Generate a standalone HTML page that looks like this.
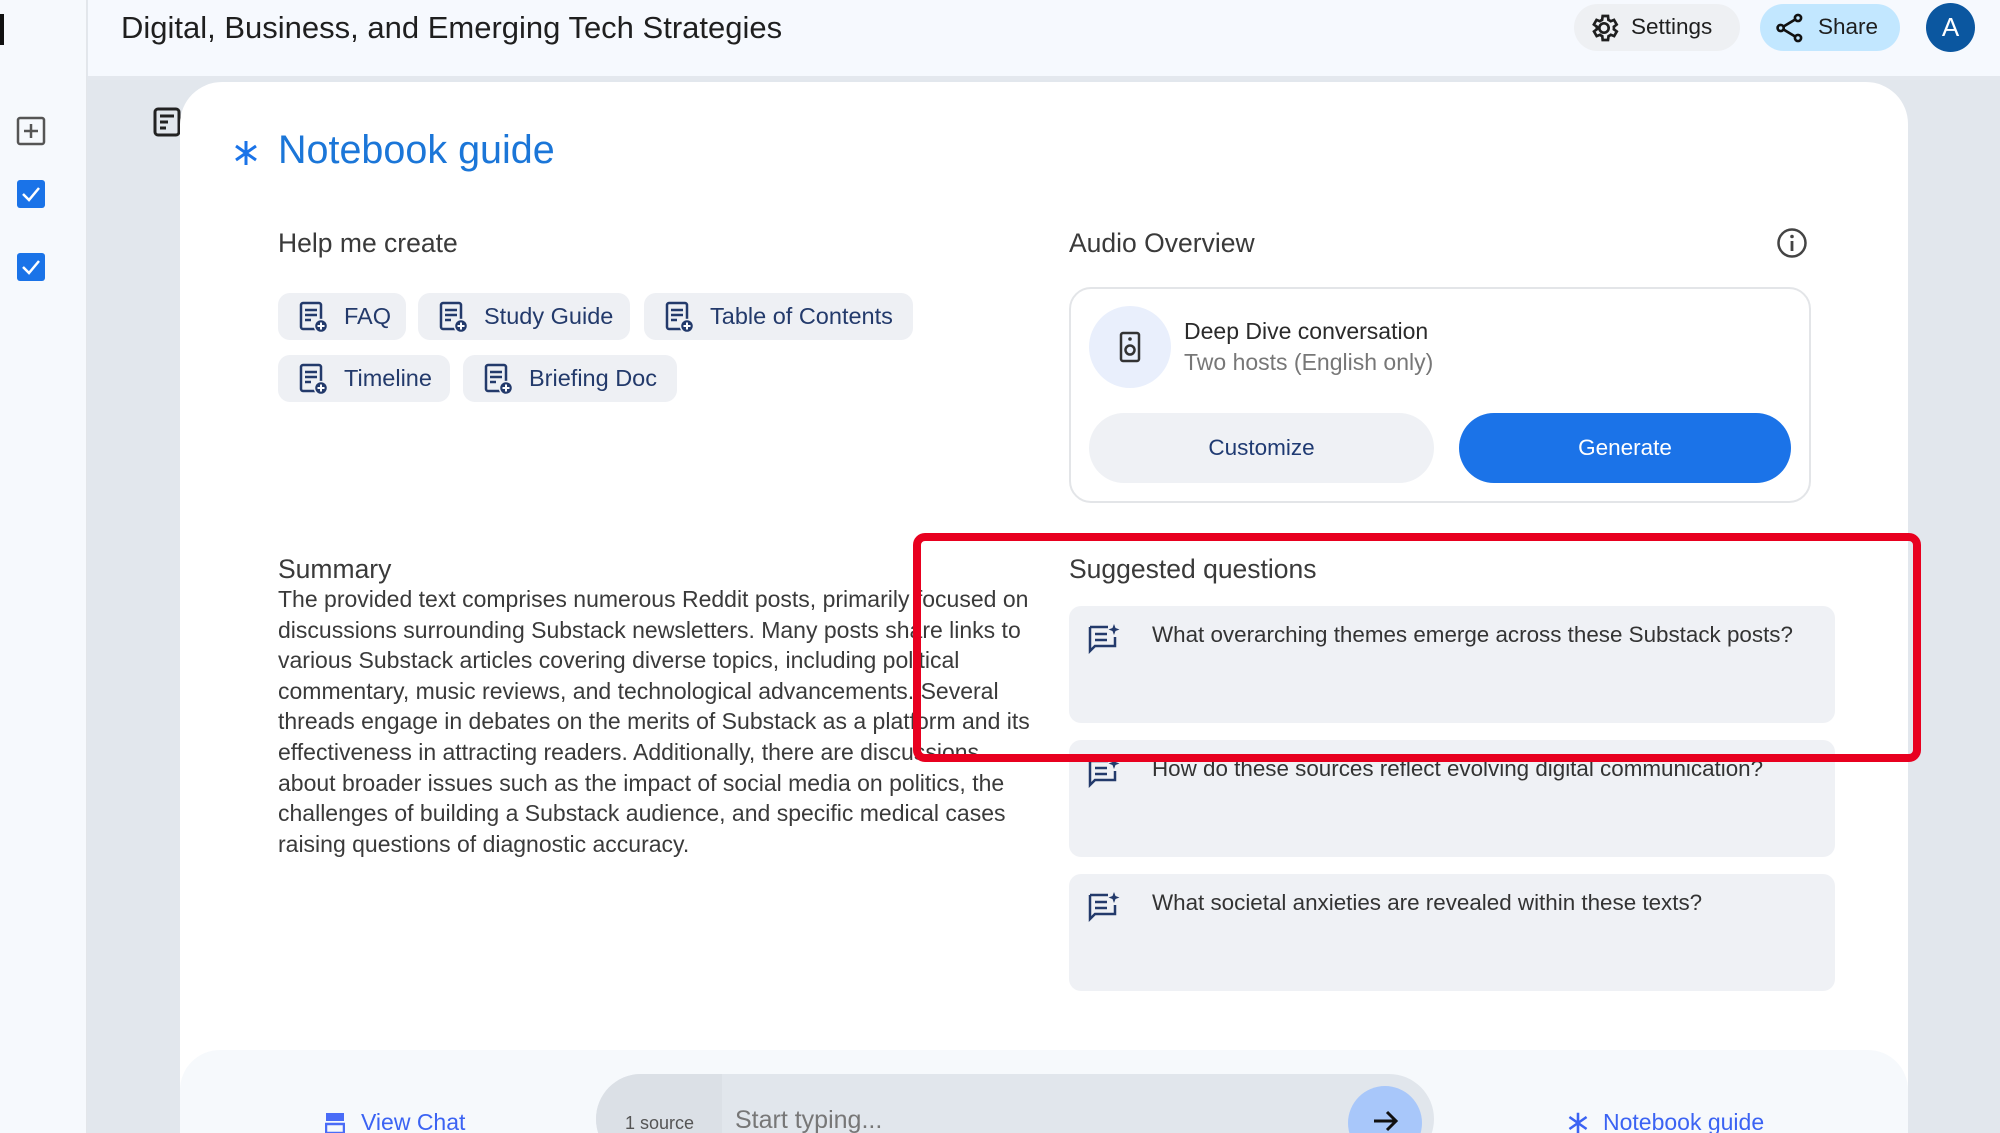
<!DOCTYPE html>
<html style="overflow:hidden;width:2000px;height:1133px"><head><meta charset="utf-8"><style>
*{margin:0;padding:0;box-sizing:border-box}
body{width:2000px;height:1133px;overflow:hidden;background:#e2e7ed;font-family:"Liberation Sans",Arial,sans-serif;position:relative;color:#1f1f1f}
.a{position:absolute}
.chip{position:absolute;height:47px;background:#eef0f4;border-radius:12px;display:flex;align-items:center;padding-left:20px;font-size:23.5px;color:#233a6b;font-weight:500}
.chip svg{margin-right:14px}
.q{position:absolute;left:1069px;width:766px;height:117px;background:#eff1f5;border-radius:12px}
.q svg{position:absolute;left:18px;top:16px}
.q span{position:absolute;left:83px;top:16px;font-size:22.4px;color:#333}
.sum{position:absolute;left:278px;top:584px;font-size:23px;line-height:30.6px;color:#3a3a3a;white-space:nowrap}
</style></head><body>
<div class="a" style="left:0;top:0;width:2000px;height:1133px;overflow:hidden">
<!-- sidebar -->
<div class="a" style="left:0;top:0;width:87px;height:1133px;background:#f6f9fd;border-right:1px solid #e3e6ea"></div>
<div class="a" style="left:0;top:14px;width:4px;height:31px;background:#111"></div>
<svg class="a" style="left:16px;top:116px" width="30" height="30" viewBox="0 0 30 30"><rect x="2" y="2" width="26" height="26" rx="2" fill="none" stroke="#555" stroke-width="2.5"/><path d="M15 8v14M8 15h14" stroke="#555" stroke-width="2.5"/></svg>
<svg class="a" style="left:16px;top:179px" width="30" height="30" viewBox="0 0 30 30"><rect x="1" y="1" width="28" height="28" rx="3" fill="#1a73e8"/><path d="M7 15l6 6 10-12" fill="none" stroke="#fff" stroke-width="2.5"/></svg>
<svg class="a" style="left:16px;top:252px" width="30" height="30" viewBox="0 0 30 30"><rect x="1" y="1" width="28" height="28" rx="3" fill="#1a73e8"/><path d="M7 15l6 6 10-12" fill="none" stroke="#fff" stroke-width="2.5"/></svg>
<!-- header -->
<div class="a" style="left:88px;top:0;width:1912px;height:80px;background:#f6f9fe;border-bottom:4px solid #e4e8ee"></div>
<div class="a" style="left:121px;top:10px;font-size:31px;color:#1f1f1f">Digital, Business, and Emerging Tech Strategies</div>
<div class="a" style="left:1574px;top:4px;width:166px;height:47px;background:#eef0f3;border-radius:24px"></div>
<svg class="a" style="left:1588px;top:12px" width="32" height="32" viewBox="0 0 24 24"><path d="M12 8.5a3.5 3.5 0 1 0 0 7 3.5 3.5 0 0 0 0-7zM19.4 13a7.5 7.5 0 0 0 0-2l2.1-1.6-2-3.5-2.5 1a7.6 7.6 0 0 0-1.7-1L15 3h-4l-.4 2.9a7.6 7.6 0 0 0-1.7 1l-2.5-1-2 3.5L6.6 11a7.5 7.5 0 0 0 0 2l-2.1 1.6 2 3.5 2.5-1a7.6 7.6 0 0 0 1.7 1L11 21h4l.4-2.9a7.6 7.6 0 0 0 1.7-1l2.5 1 2-3.5z" fill="none" stroke="#1f1f1f" stroke-width="2"/></svg>
<div class="a" style="left:1631px;top:14px;font-size:22.5px;color:#1f1f1f">Settings</div>
<div class="a" style="left:1760px;top:4px;width:140px;height:47px;background:#c2e7ff;border-radius:24px"></div>
<svg class="a" style="left:1774px;top:12px" width="32" height="32" viewBox="0 0 24 24"><circle cx="18" cy="4.5" r="2.3" fill="none" stroke="#111" stroke-width="2"/><circle cx="5" cy="12" r="2.3" fill="none" stroke="#111" stroke-width="2"/><circle cx="18" cy="19.5" r="2.3" fill="none" stroke="#111" stroke-width="2"/><path d="M7 11l9-5.5M7 13l9 5.5" stroke="#111" stroke-width="2"/></svg>
<div class="a" style="left:1818px;top:14px;font-size:22.5px;color:#1f1f1f">Share</div>
<div class="a" style="left:1926px;top:3px;width:49px;height:49px;border-radius:50%;background:#0b57a0;color:#fff;font-size:26px;text-align:center;line-height:49px">A</div>
<!-- main card -->
<svg class="a" style="left:153px;top:107px" width="28" height="30" viewBox="0 0 28 30"><rect x="2" y="2" width="24" height="26" rx="3" fill="none" stroke="#222" stroke-width="3"/><path d="M7 9h14M7 15h8M7 21h6" stroke="#222" stroke-width="3"/></svg>
<div class="a" style="left:180px;top:82px;width:1728px;height:1100px;background:#fff;border-radius:42px"></div>
<svg class="a" style="left:232px;top:139px" width="28" height="28" viewBox="0 0 28 28"><path d="M14 2v24M4 7l20 14M24 7L4 21" stroke="#1a73e8" stroke-width="3"/></svg>
<div class="a" style="left:278px;top:128px;font-size:39.5px;color:#1b76d8;font-weight:500">Notebook guide</div>
<div class="a" style="left:278px;top:228px;font-size:26.5px;color:#3a3a3a;font-weight:500">Help me create</div>
<div class="chip" style="left:278px;top:293px;width:128px"><svg width="32" height="34" viewBox="0 0 32 34"><rect x="3" y="3" width="20" height="26" rx="2" fill="none" stroke="#233a6b" stroke-width="2.5"/><path d="M7 10h12M7 15h12M7 20h6" stroke="#233a6b" stroke-width="2.5"/><circle cx="23" cy="26" r="6.5" fill="#233a6b" stroke="#eef0f4" stroke-width="1.5"/><path d="M23 22.5v7M19.5 26h7" stroke="#fff" stroke-width="2"/></svg>FAQ</div>
<div class="chip" style="left:418px;top:293px;width:212px"><svg width="32" height="34" viewBox="0 0 32 34"><rect x="3" y="3" width="20" height="26" rx="2" fill="none" stroke="#233a6b" stroke-width="2.5"/><path d="M7 10h12M7 15h12M7 20h6" stroke="#233a6b" stroke-width="2.5"/><circle cx="23" cy="26" r="6.5" fill="#233a6b" stroke="#eef0f4" stroke-width="1.5"/><path d="M23 22.5v7M19.5 26h7" stroke="#fff" stroke-width="2"/></svg>Study Guide</div>
<div class="chip" style="left:644px;top:293px;width:269px"><svg width="32" height="34" viewBox="0 0 32 34"><rect x="3" y="3" width="20" height="26" rx="2" fill="none" stroke="#233a6b" stroke-width="2.5"/><path d="M7 10h12M7 15h12M7 20h6" stroke="#233a6b" stroke-width="2.5"/><circle cx="23" cy="26" r="6.5" fill="#233a6b" stroke="#eef0f4" stroke-width="1.5"/><path d="M23 22.5v7M19.5 26h7" stroke="#fff" stroke-width="2"/></svg>Table of Contents</div>
<div class="chip" style="left:278px;top:355px;width:172px"><svg width="32" height="34" viewBox="0 0 32 34"><rect x="3" y="3" width="20" height="26" rx="2" fill="none" stroke="#233a6b" stroke-width="2.5"/><path d="M7 10h12M7 15h12M7 20h6" stroke="#233a6b" stroke-width="2.5"/><circle cx="23" cy="26" r="6.5" fill="#233a6b" stroke="#eef0f4" stroke-width="1.5"/><path d="M23 22.5v7M19.5 26h7" stroke="#fff" stroke-width="2"/></svg>Timeline</div>
<div class="chip" style="left:463px;top:355px;width:214px"><svg width="32" height="34" viewBox="0 0 32 34"><rect x="3" y="3" width="20" height="26" rx="2" fill="none" stroke="#233a6b" stroke-width="2.5"/><path d="M7 10h12M7 15h12M7 20h6" stroke="#233a6b" stroke-width="2.5"/><circle cx="23" cy="26" r="6.5" fill="#233a6b" stroke="#eef0f4" stroke-width="1.5"/><path d="M23 22.5v7M19.5 26h7" stroke="#fff" stroke-width="2"/></svg>Briefing Doc</div>
<!-- audio -->
<div class="a" style="left:1069px;top:228px;font-size:26.5px;color:#3a3a3a;font-weight:500">Audio Overview</div>
<svg class="a" style="left:1776px;top:227px" width="32" height="32" viewBox="0 0 32 32"><circle cx="16" cy="16" r="13.5" fill="none" stroke="#444" stroke-width="2.5"/><path d="M16 14v10" stroke="#444" stroke-width="2.8"/><circle cx="16" cy="9.5" r="1.8" fill="#444"/></svg>
<div class="a" style="left:1069px;top:287px;width:742px;height:216px;border:2px solid #e3e5e8;border-radius:22px"></div>
<div class="a" style="left:1089px;top:306px;width:82px;height:82px;border-radius:50%;background:#e9effc"></div>
<svg class="a" style="left:1118px;top:331px" width="24" height="32" viewBox="0 0 24 32"><rect x="3" y="2" width="18" height="28" rx="2" fill="none" stroke="#333" stroke-width="2.5"/><circle cx="12" cy="8" r="1.8" fill="#333"/><circle cx="12" cy="19" r="4.5" fill="none" stroke="#333" stroke-width="2.5"/></svg>
<div class="a" style="left:1184px;top:318px;font-size:23px;color:#2a2a2a;font-weight:500">Deep Dive conversation</div>
<div class="a" style="left:1184px;top:349px;font-size:23px;color:#777">Two hosts (English only)</div>
<div class="a" style="left:1089px;top:413px;width:345px;height:70px;background:#eff1f5;border-radius:35px;text-align:center;line-height:70px;font-size:22.5px;color:#1f3a72;font-weight:500">Customize</div>
<div class="a" style="left:1459px;top:413px;width:332px;height:70px;background:#1b73e8;border-radius:35px;text-align:center;line-height:70px;font-size:22.5px;color:#fff;font-weight:500">Generate</div>
<!-- summary -->
<div class="a" style="left:278px;top:554px;font-size:26.5px;color:#3a3a3a;font-weight:500">Summary</div>
<div class="sum">The provided text comprises numerous Reddit posts, primarily focused on<br>discussions surrounding Substack newsletters. Many posts share links to<br>various Substack articles covering diverse topics, including political<br>commentary, music reviews, and technological advancements. Several<br>threads engage in debates on the merits of Substack as a platform and its<br>effectiveness in attracting readers. Additionally, there are discussions<br>about broader issues such as the impact of social media on politics, the<br>challenges of building a Substack audience, and specific medical cases<br>raising questions of diagnostic accuracy.</div>
<!-- suggested -->
<div class="a" style="left:1069px;top:554px;font-size:26.5px;color:#3a3a3a;font-weight:500">Suggested questions</div>
<div class="q" style="top:606px"><svg width="34" height="32" viewBox="0 0 34 32"><path d="M3 5h18M3 5v24l5-5h20V15" fill="none" stroke="#233a6b" stroke-width="2.5"/><path d="M8 12h12M8 18h12" stroke="#233a6b" stroke-width="2.5"/><path d="M27 2l1.5 4 4 1.5-4 1.5-1.5 4-1.5-4-4-1.5 4-1.5z" fill="#233a6b"/></svg><span>What overarching themes emerge across these Substack posts?</span></div>
<div class="q" style="top:740px"><svg width="34" height="32" viewBox="0 0 34 32"><path d="M3 5h18M3 5v24l5-5h20V15" fill="none" stroke="#233a6b" stroke-width="2.5"/><path d="M8 12h12M8 18h12" stroke="#233a6b" stroke-width="2.5"/><path d="M27 2l1.5 4 4 1.5-4 1.5-1.5 4-1.5-4-4-1.5 4-1.5z" fill="#233a6b"/></svg><span>How do these sources reflect evolving digital communication?</span></div>
<div class="q" style="top:874px"><svg width="34" height="32" viewBox="0 0 34 32"><path d="M3 5h18M3 5v24l5-5h20V15" fill="none" stroke="#233a6b" stroke-width="2.5"/><path d="M8 12h12M8 18h12" stroke="#233a6b" stroke-width="2.5"/><path d="M27 2l1.5 4 4 1.5-4 1.5-1.5 4-1.5-4-4-1.5 4-1.5z" fill="#233a6b"/></svg><span>What societal anxieties are revealed within these texts?</span></div>
<!-- red box -->
<div class="a" style="left:913px;top:533px;width:1008px;height:229px;border:8px solid #e8001f;border-radius:12px"></div>
<!-- bottom -->
<div class="a" style="left:180px;top:1050px;width:1728px;height:100px;background:#f6f9fc;border-radius:40px 40px 0 0"></div>
<div class="a" style="left:596px;top:1074px;width:838px;height:90px;background:#e1e6ec;border-radius:45px;overflow:hidden"><div style="width:126px;height:100%;background:#dbe0e6"></div></div>
<div class="a" style="left:625px;top:1113px;font-size:18px;color:#555">1 source</div>
<div class="a" style="left:735px;top:1106px;font-size:25px;color:#777">Start typing...</div>
<div class="a" style="left:1348px;top:1086px;width:74px;height:74px;border-radius:50%;background:#a8c7fa"></div>
<svg class="a" style="left:1372px;top:1109px" width="28" height="24" viewBox="0 0 28 24"><path d="M2 12h22M15 3l9 9-9 9" fill="none" stroke="#111" stroke-width="3"/></svg>
<svg class="a" style="left:325px;top:1112px" width="20" height="22" viewBox="0 0 20 22"><rect x="1" y="1" width="18" height="8" fill="#4a6cf7"/><rect x="1" y="12" width="18" height="9" fill="none" stroke="#4a6cf7" stroke-width="2.5"/></svg>
<div class="a" style="left:361px;top:1109px;font-size:23px;color:#3b63f3">View Chat</div>
<svg class="a" style="left:1566px;top:1111px" width="24" height="24" viewBox="0 0 28 28"><path d="M14 2v24M4 7l20 14M24 7L4 21" stroke="#3b63f3" stroke-width="3"/></svg>
<div class="a" style="left:1603px;top:1109px;font-size:23px;color:#3b63f3">Notebook guide</div>
</div>
</body></html>
